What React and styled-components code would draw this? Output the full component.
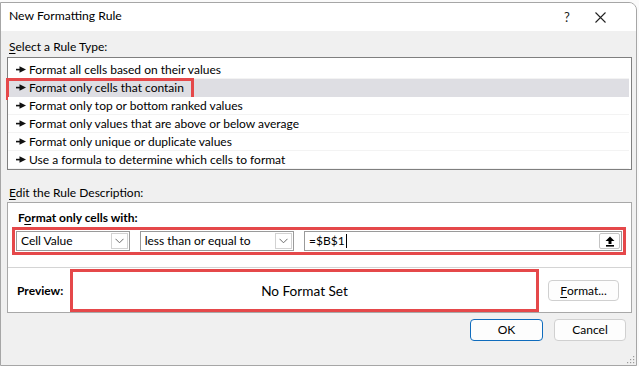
import React from 'react';
import styled, { createGlobalStyle } from 'styled-components';

const GlobalStyle = createGlobalStyle`
  html, body { margin: 0; padding: 0; background: #fafafa; }
  body {
    font-family: Lato, "Noto Sans", sans-serif;
    font-size: 12px;
    color: #000;
  }
  * { box-sizing: border-box; }
`;

const Page = styled.div`
  width: 639px;
  height: 366px;
  padding-top: 2px;
  overflow: hidden;
`;

const Window = styled.div`
  width: 637px;
  height: 364px;
  border: 1px solid #a6a6a6;
  border-radius: 0 8px 0 0;
  background: #f0f0f0;
  display: flex;
  flex-direction: column;
  overflow: hidden;
`;

const TitleBar = styled.div`
  height: 28px;
  background: #fff;
  display: flex;
  align-items: center;
  padding-left: 8px;
  flex-shrink: 0;
`;

const Title = styled.div`
  flex: 1;
  font-size: 12.2px;
  line-height: 16px;
  margin-top: -2px;
`;

const TitleButton = styled.div`
  width: ${p => p.$w}px;
  height: 28px;
  display: flex;
  align-items: center;
  justify-content: center;
  font-size: 13px;
  color: #222;
`;

const Body = styled.div`
  flex: 1;
  display: flex;
  flex-direction: column;
  padding: 0 0 0 6px;
`;

const SectionLabel = styled.div`
  line-height: 16px;
  margin: ${p => p.$m};
  padding-left: 2px;
  & u { text-decoration: underline; text-underline-offset: 2px; }
`;

const ListBox = styled.div`
  width: 625px;
  height: 113px;
  border: 1px solid #7f7f7f;
  background: #fff;
  padding-top: 3px;
`;

const Row = styled.div`
  position: relative;
  height: 18px;
  margin-right: 2px;
  display: flex;
  align-items: center;
  padding-left: 8px;
  background: ${p => (p.$selected ? '#dedee3' : '#fff')};
  border-bottom: 1px solid ${p => (p.$selected ? '#dedee3' : '#f3f3f3')};
  line-height: 16px;
`;

const RowArrow = styled.svg`
  width: 10px;
  height: 7px;
  margin-right: 3px;
  flex-shrink: 0;
`;

const Highlight = styled.div`
  position: absolute;
  left: -2px;
  top: -1px;
  width: 188px;
  height: 22px;
  border: 3px solid #e5484a;
  pointer-events: none;
`;

const Panel = styled.div`
  width: 625px;
  height: 129px;
  border: 1px solid #a8a8a8;
  background: #fff;
  display: flex;
  flex-direction: column;
`;

const PanelTop = styled.div`
  height: 65px;
  padding: 7px 0 0 10px;
  border-bottom: 1px solid #d4d4d4;
`;

const BoldLabel = styled.div`
  font-weight: 700;
  line-height: 16px;
  margin-bottom: 1px;
  & u { text-decoration: underline; text-underline-offset: 2px; }
`;

const RedFrame = styled.div`
  border: 3px solid #e5484a;
  display: flex;
  align-items: center;
`;

const ConditionFrame = styled(RedFrame)`
  width: 614px;
  height: 28px;
  margin-left: -6px;
  padding: 1px;
  gap: 10px;
`;

const Combo = styled.div`
  width: ${p => p.$w}px;
  height: 20px;
  border: 1px solid #9a9a9a;
  background: #fff;
  display: flex;
  align-items: center;
  padding-left: 4px;
  line-height: 16px;
`;

const ComboText = styled.div`
  flex: 1;
  white-space: nowrap;
  overflow: hidden;
`;

const Caret = styled.span`
  display: inline-block;
  width: 1px;
  height: 14px;
  background: #000;
  vertical-align: middle;
  margin-left: 1px;
  margin-top: -2px;
`;

const ComboButton = styled.div`
  width: 17px;
  height: 16px;
  margin-right: 1px;
  border: 1px solid #d2d2d2;
  display: flex;
  align-items: center;
  justify-content: center;
`;

const RefButton = styled.div`
  width: 21px;
  height: 16px;
  margin-right: 1px;
  border: 1px solid #c4c4c4;
  border-radius: 2px;
  background: #fff;
  display: flex;
  align-items: center;
  justify-content: center;
`;

const PanelBottom = styled.div`
  flex: 1;
  display: flex;
  align-items: center;
  padding: 1px 0 0 9px;
`;

const PreviewLabel = styled.div`
  width: 53px;
  font-weight: 700;
  line-height: 16px;
`;

const PreviewFrame = styled(RedFrame)`
  width: 469px;
  height: 43px;
  justify-content: center;
  font-size: 13.6px;
  background: #fff;
`;

const Button = styled.div`
  width: ${p => p.$w}px;
  height: ${p => p.$h}px;
  border: 1px solid ${p => (p.$primary ? '#0f6cbd' : '#d0d0d0')};
  border-radius: 4px;
  background: #fdfdfd;
  display: flex;
  align-items: center;
  justify-content: center;
  line-height: 16px;
  margin-left: ${p => p.$ml || 0}px;
  & u { text-decoration: underline; text-underline-offset: 2px; }
`;

const Footer = styled.div`
  display: flex;
  justify-content: flex-end;
  padding: 6px 10px 0 0;
  gap: 11px;
  position: relative;
  height: 100%;
`;

const Grip = styled.svg`
  position: absolute;
  right: 1px;
  bottom: 1px;
  width: 10px;
  height: 10px;
`;

const Arrow = () => (
  <RowArrow viewBox="0 0 10 7">
    <rect x="0" y="2.8" width="5" height="1.6" fill="#111" />
    <polygon points="3.5,0.3 10,3.6 3.5,6.8" fill="#111" />
  </RowArrow>
);

const Chevron = () => (
  <svg width="9" height="6" viewBox="0 0 9 6">
    <polyline points="0.5,0.8 4.5,4.8 8.5,0.8" fill="none" stroke="#6a6a6a" strokeWidth="1" />
  </svg>
);

const UpArrow = () => (
  <svg width="10" height="11" viewBox="0 0 10 11">
    <polygon points="5,0.5 9.5,5 6.5,5 6.5,8 3.5,8 3.5,5 0.5,5" fill="#000" />
    <rect x="1" y="9" width="8" height="1.6" fill="#000" />
  </svg>
);

const rules = [
  'Format all cells based on their values',
  'Format only cells that contain',
  'Format only top or bottom ranked values',
  'Format only values that are above or below average',
  'Format only unique or duplicate values',
  'Use a formula to determine which cells to format',
];

export default function App() {
  return (
    <Page>
      <GlobalStyle />
      <Window>
        <TitleBar>
          <Title>New Formatting Rule</Title>
          <TitleButton $w={20}>?</TitleButton>
          <TitleButton $w={46}>
            <svg width="11" height="11" viewBox="0 0 11 11">
              <path d="M0.5 0.5 L10.5 10.5 M10.5 0.5 L0.5 10.5" stroke="#222" strokeWidth="1.1" />
            </svg>
          </TitleButton>
          <TitleButton $w={13} />
        </TitleBar>
        <Body>
          <SectionLabel $m="8px 0 2px 0">
            <u>S</u>elect a Rule Type:
          </SectionLabel>
          <ListBox>
            {rules.map((r, i) => (
              <Row key={r} $selected={i === 1}>
                <Arrow />
                {r}
                {i === 1 && <Highlight />}
              </Row>
            ))}
          </ListBox>
          <SectionLabel $m="15px 0 1px 0">
            <u>E</u>dit the Rule Description:
          </SectionLabel>
          <Panel>
            <PanelTop>
              <BoldLabel>
                F<u>o</u>rmat only cells with:
              </BoldLabel>
              <ConditionFrame>
                <Combo $w={114}>
                  <ComboText>Cell Value</ComboText>
                  <ComboButton>
                    <Chevron />
                  </ComboButton>
                </Combo>
                <Combo $w={155}>
                  <ComboText>less than or equal to</ComboText>
                  <ComboButton>
                    <Chevron />
                  </ComboButton>
                </Combo>
                <Combo $w={319}>
                  <ComboText>
                    =$B$1
                    <Caret />
                  </ComboText>
                  <RefButton>
                    <UpArrow />
                  </RefButton>
                </Combo>
              </ConditionFrame>
            </PanelTop>
            <PanelBottom>
              <PreviewLabel>Preview:</PreviewLabel>
              <PreviewFrame>No Format Set</PreviewFrame>
              <Button $w={71} $h={21} $ml={9}>
                <u>F</u>ormat...
              </Button>
            </PanelBottom>
          </Panel>
          <Footer>
            <Button $w={73} $h={22} $primary>
              OK
            </Button>
            <Button $w={72} $h={22}>
              Cancel
            </Button>
            <Grip viewBox="0 0 10 10">
              {[[8, 2], [8, 5], [5, 5], [8, 8], [5, 8], [2, 8]].map(([x, y]) => (
                <rect key={`${x}-${y}`} x={x} y={y} width="1.2" height="1.2" fill="#9a9a9a" />
              ))}
            </Grip>
          </Footer>
        </Body>
      </Window>
    </Page>
  );
}
